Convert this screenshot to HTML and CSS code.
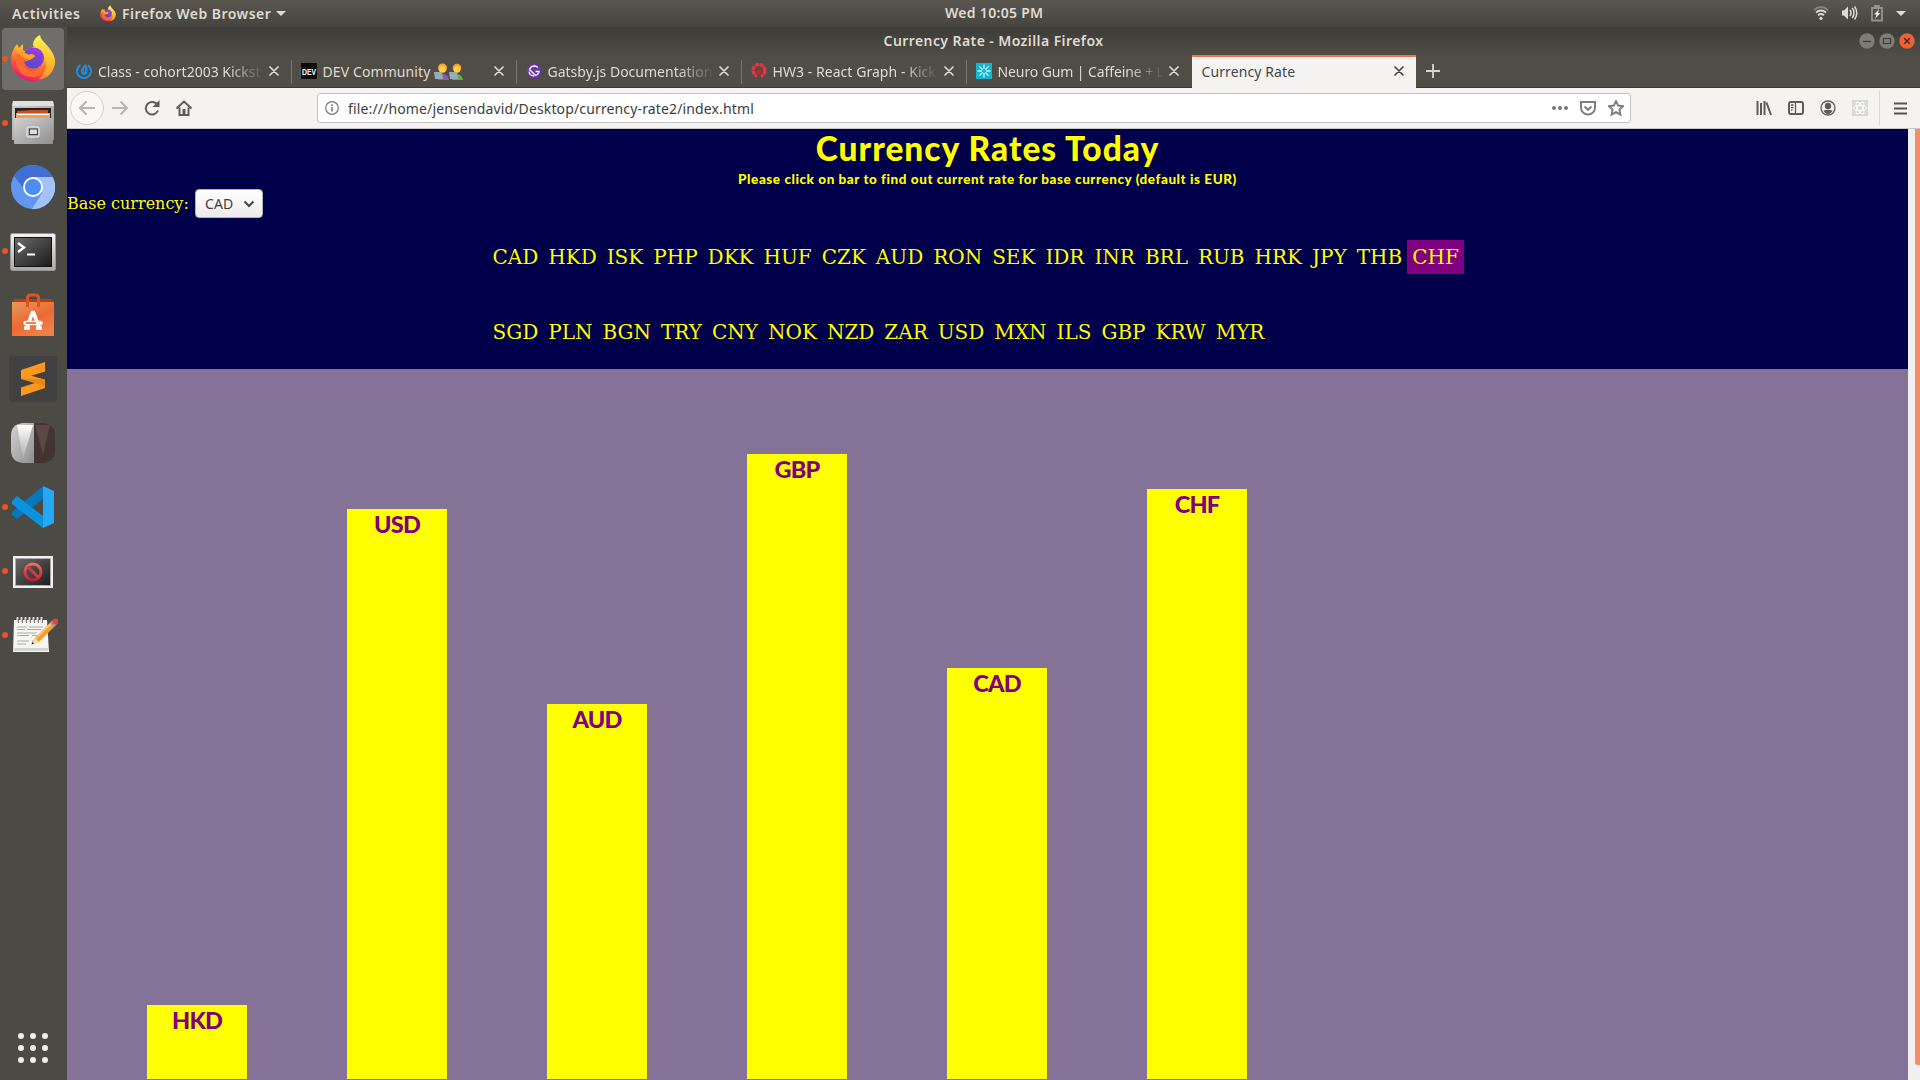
FILE: index.html
```html
<!DOCTYPE html>
<html lang="en">
<head>
<meta charset="utf-8">
<title>Currency Rate</title>
<link rel="stylesheet" href="styles.css">
</head>
<body>
<svg width="0" height="0" class="defs" aria-hidden="true">
  <defs>
    <linearGradient id="flame" x1=".8" y1="0" x2=".3" y2="1"><stop offset="0" stop-color="#fff44f"/><stop offset=".35" stop-color="#ffb02e"/><stop offset=".65" stop-color="#ff5a36"/><stop offset="1" stop-color="#e8117a"/></linearGradient>
    <linearGradient id="tail" x1=".5" y1="0" x2=".5" y2="1"><stop offset="0" stop-color="#fff44f"/><stop offset=".6" stop-color="#ffc02e"/><stop offset="1" stop-color="#ff8a30"/></linearGradient>
    <linearGradient id="globe" x1=".7" y1="0" x2=".3" y2="1"><stop offset="0" stop-color="#a238e8"/><stop offset="1" stop-color="#4b4fc4"/></linearGradient>
    <linearGradient id="steel" x1="0" y1="0" x2="1" y2="1"><stop offset="0" stop-color="#d2d2d2"/><stop offset="1" stop-color="#8e8e8e"/></linearGradient>
    <linearGradient id="frame" x1="0" y1="0" x2="0" y2="1"><stop offset="0" stop-color="#f4f4f4"/><stop offset="1" stop-color="#a8a8a8"/></linearGradient>
    <linearGradient id="screen" x1="0" y1="0" x2="1" y2="1"><stop offset="0" stop-color="#6a6a6a"/><stop offset="1" stop-color="#1c1c1c"/></linearGradient>
    <linearGradient id="bag" x1="0" y1="0" x2=".6" y2="1"><stop offset="0" stop-color="#e59a5c"/><stop offset=".6" stop-color="#ec6a32"/><stop offset="1" stop-color="#f08048"/></linearGradient>
    <linearGradient id="pale" x1="0" y1="0" x2="0" y2="1"><stop offset="0" stop-color="#ffffff"/><stop offset="1" stop-color="#a9a9a9"/></linearGradient>
    <linearGradient id="ban" x1="0" y1="0" x2="0" y2="1"><stop offset="0" stop-color="#f0705a"/><stop offset="1" stop-color="#c01c3c"/></linearGradient>
    <symbol id="firefox" viewBox="0 0 46 48">
      <path d="M1 27C1 18 4 14 7 10l2 4 4-4v6l3 2c4-4 8-6 12-6 8 1 17 6 17 15 0 12-10 20-22 20S1 38 1 27z" fill="url(#flame)"/>
      <path d="M23 12c0-6 3-9 7-11 1 6 6 8 10 14 6 8 6 17 1 24-3 4-8 6-12 6 6-6 10-14 6-22-3-6-8-9-12-11z" fill="url(#tail)"/>
      <circle cx="23.500" cy="24" r="10.500" fill="url(#globe)"/>
      <path d="M7 19c5-1 9 0 12 2 2-2 4-1 6 1-2 2-3 3-6 4-2 2-5 1-6 2 0 5 4 9 10 9 7 0 10-4 12-8 1 9-5 14-13 14S6 37 6 28z" fill="#ff6a30"/>
      <path d="M7 19c5-1 9 0 12 2 2-2 4-1 6 1-2 2-3 3-6 4l-5-2z" fill="#ffa621"/>
    </symbol>
    <symbol id="close" viewBox="0 0 10 10"><path d="M1 1l8 8M9 1l-8 8" stroke="currentColor" stroke-width="1.700" fill="none" stroke-linecap="round"/></symbol>
  </defs>
</svg>

<header class="system-bar">
  <span class="activities">Activities</span>
  <span class="app-menu"><svg class="app-icon" width="16" height="17"><use href="#firefox"/></svg><span class="app-name">Firefox Web Browser</span><i class="caret"></i></span>
  <span class="clock">Wed 10:05 PM</span>
  <span class="status">
    <svg width="16" height="16" viewBox="0 0 16 16" fill="none" stroke="#dcdad5" stroke-width="1.800"><path d="M1 5q7-6 14 0" stroke="#85837d"/><path d="M3 7.500q5-4 10 0M5 10.200q3-2.400 6 0"/><circle cx="8" cy="13.400" r="1.200" fill="#dcdad5" stroke-width="1"/></svg>
    <svg width="17" height="16" viewBox="0 0 17 16" fill="none" stroke="#dcdad5" stroke-width="1.500"><path d="M1 5.500h2l4-4v13l-4-4H1z" fill="#dcdad5" stroke="none"/><path d="M9 5q2 3 0 6M11.300 3q3.400 5 0 10M13.600 1.500q4.400 6.500 0 13"/></svg>
    <svg width="14" height="17" viewBox="0 0 14 17"><path d="M2 3h10v12.500H2zM5 3V1h4v2" fill="none" stroke="#94928c" stroke-width="1.800"/><path d="M9 4L4 9.500h2.500L5 14l5.500-6H8z" fill="#e8e6e1"/></svg>
    <i class="caret"></i>
  </span>
</header>

<div class="desktop">
  <nav class="dock">
    <div class="launcher running focused"><svg class="raised" width="46" height="48"><use href="#firefox"/></svg></div>
    <div class="launcher running"><svg width="44" height="46" viewBox="0 0 44 46">
      <path d="M2 1h40l1 6v33H1V7z" fill="url(#steel)"/><path d="M2 1h40l1 5H1z" fill="#e0e0e0"/><path d="M4 8h36v11H4z" fill="#24211f"/><path d="M6 11l15-1h16v8H6z" fill="#c9501c"/><path d="M5 13h34v6H5z" fill="#f0a050"/><path d="M6 14.500h32" stroke="#fff"/><path d="M3 18h39v26H3z" fill="url(#steel)"/><rect x="16" y="27" width="12" height="10" rx="2" fill="#aaa" stroke="#dcdcdc" stroke-width="1.500"/><rect x="18.500" y="29" width="8" height="5.500" fill="#ddd" stroke="#444"/></svg></div>
    <div class="launcher"><svg width="44" height="44" viewBox="0 0 44 44">
      <circle cx="22" cy="22" r="22" fill="#6297f1"/><path d="M3 11a22 22 0 0 1 38.500 1H22L12 23z" fill="#3f6fd4"/><path d="M22 12h19.700A22 22 0 0 1 21 44l10-16z" fill="#a3c2f9"/><circle cx="22" cy="22" r="9" fill="#4b8cf5" stroke="#fff" stroke-width="1.800"/></svg></div>
    <div class="launcher running lowered"><svg width="46" height="38" viewBox="0 0 46 38">
      <rect x=".5" y=".5" width="45" height="37" rx="2" fill="url(#frame)" stroke="#999"/><rect x="4" y="4" width="38" height="30" fill="#111"/><rect x="5" y="5" width="36" height="28" fill="url(#screen)"/><path d="M8 10l6 4.500-6 4.500" fill="none" stroke="#fff" stroke-width="2.400"/><path d="M17 21.500h8" stroke="#fff" stroke-width="2"/></svg></div>
    <div class="launcher"><svg width="42" height="44" viewBox="0 0 42 44">
      <path d="M0 9l3-3h36l3 3z" fill="#b8400f"/><path d="M0 9h42v34H0z" fill="url(#bag)"/><path d="M15.500 14V5q0-3 3-3h5q3 0 3 3v9" fill="none" stroke="#dd5426" stroke-width="3"/><path d="M15 34l5.500-14.500h1L27 34M12 35h6M24 35h6" fill="none" stroke="#fff" stroke-width="3.600"/><path d="M13.500 30h15" stroke="#fff" stroke-width="4.500" stroke-linecap="round"/><path d="M14 30h10" stroke="#ea6630" stroke-width="1.600"/></svg></div>
    <div class="launcher"><svg width="48" height="46" viewBox="0 0 48 46">
      <rect width="48" height="46" rx="3" fill="#414141"/><path d="M12 14l24-8v9.500l-14 4.200 14 3.800v8.500L12 40v-8.500l14-4.500-14-4z" fill="#ff981c"/><path d="M12 22.500l24 1v7z" fill="#dc7d12" opacity=".6"/></svg></div>
    <div class="launcher"><svg width="44" height="40" viewBox="0 0 44 40">
      <path d="M12 0h11v40H12Q0 39 0 27V13Q0 1 12 0z" fill="url(#steel)"/><path d="M23 0h9q12 1 12 13v14q0 12-12 13h-9z" fill="#433331"/><path d="M6 2h16l-10 34z" fill="url(#pale)"/><path d="M24 2h15l-7 30z" fill="#5c4745"/></svg></div>
    <div class="launcher running"><svg width="42" height="42" viewBox="0 0 42 42">
      <path d="M0 26L31 0v13L5 33l-5-4z" fill="#0877bd"/><path d="M0 15l5-5 26 20v12L0 18z" fill="#0a94df"/><path d="M31 0l11 5v32l-11 5z" fill="#27a8f2"/></svg></div>
    <div class="launcher running lowered"><svg width="40" height="32" viewBox="0 0 40 32">
      <path d="M0 0h40v32H0z" fill="#f2f2f2"/><path d="M2.500 2.500h35v27h-35z" fill="url(#screen)" stroke="#aaa"/><circle cx="20" cy="16" r="8" fill="none" stroke="url(#ban)" stroke-width="3"/><path d="M14.500 10.500l11 11" stroke="#d33a46" stroke-width="3"/></svg></div>
    <div class="launcher running pad-icon"><svg width="46" height="36" viewBox="0 0 46 36">
      <path d="M2 3h33l2 32H1z" fill="#f5f5f2"/><path d="M2 31h34v3H2z" fill="#d4d4d0"/><path d="M5 10h10m2 0h14M5 12.500h8m2 0h14M5 16h20M5 18.500h12m3 0h9M5 24h12m3 0h6M5 27h9" stroke="#aaa"/><path d="M5.500 0v5m4-5v5m4-5v5m4-5v5m4-5v5m4-5v5m4-5v5" stroke="#ddd" stroke-width="2"/><path d="M6.500 2v4m4-4v4m4-4v4m4-4v4m4-4v4m4-4v4m4-4v4" stroke="#555" stroke-width=".8"/><path d="M20 27l3-6L40 4l4 4-17 17z" fill="#f19d32"/><path d="M23 21L40 4l1.500 1.500L24.500 22z" fill="#fbc36c"/><path d="M20 27l3-6 4 4z" fill="#f3dbb2"/><path d="M19.500 27.500l1-2.500 1.500 1.500z" fill="#111"/><path d="M38 6l3-3 4 4-3 3z" fill="#999"/><circle cx="43.500" cy="4.500" r="3" fill="#e8384a"/></svg></div>
    <svg class="all-apps" width="30" height="30" viewBox="0 0 30 30" fill="#f0efed"><circle cx="3" cy="3" r="3"/><circle cx="15" cy="3" r="3"/><circle cx="27" cy="3" r="3"/><circle cx="3" cy="15" r="3"/><circle cx="15" cy="15" r="3"/><circle cx="27" cy="15" r="3"/><circle cx="3" cy="27" r="3"/><circle cx="15" cy="27" r="3"/><circle cx="27" cy="27" r="3"/></svg>
  </nav>

  <main class="window">
    <div class="title-bar">
      <span class="window-title">Currency Rate - Mozilla Firefox</span>
      <span class="window-buttons">
        <svg width="16" height="16" viewBox="0 0 16 16"><circle cx="8" cy="8" r="7.700" fill="#7e7c76"/><path d="M4 8.500h8" stroke="#3c3b37" stroke-width="1.200"/></svg>
        <svg width="16" height="16" viewBox="0 0 16 16"><circle cx="8" cy="8" r="7.700" fill="#7e7c76"/><path d="M4.500 5.500h7v5h-7z" fill="none" stroke="#3c3b37" stroke-width="1.200"/></svg>
        <svg width="16" height="16" viewBox="0 0 16 16"><circle cx="8" cy="8" r="7.700" fill="#ee6035"/><path d="M5.200 5.200l5.600 5.600m0-5.600l-5.600 5.600" stroke="#3c2b24" stroke-width="1.400"/></svg>
      </span>
    </div>

    <div class="tabs">
      <div class="tab"><svg class="favicon" viewBox="0 0 16 16"><path d="M4.500 2A7 7 0 1 0 12 2.300" fill="none" stroke="#2389d7" stroke-width="2.200"/><path d="M9.800.5q2.500 4.500 1.700 8.500a3.300 3.300 0 0 1-6.600-.5Q5 5 9.800.5z" fill="#2389d7"/><path d="M8.500 5v4" stroke="#504d46"/></svg><span class="label t1">Class - cohort2003 Kickst</span><svg class="x"><use href="#close"/></svg></div>
      <div class="tab"><svg class="favicon" viewBox="0 0 16 16"><path d="M0 0h16v16H0z" fill="#0c0c0c"/><text x="1" y="11.500" class="dev" textLength="14" lengthAdjust="spacingAndGlyphs">DEV</text></svg><span class="label t2">DEV Community <svg class="people" width="30" height="17" viewBox="0 0 30 17"><circle cx="8.500" cy="5" r="4.500" fill="#f6a530"/><circle cx="8.500" cy="6.500" r="3.200" fill="#ffd23c"/><path d="M4 17q0-6 5-6t6 6z" fill="#9058b8"/><path d="M0 9h8l1 7H1z" fill="#9aabb5"/><circle cx="23" cy="5" r="4.300" fill="#f6a530"/><circle cx="23" cy="6.500" r="3.200" fill="#ffd23c"/><path d="M18 17q0-6 5-6t6 6z" fill="#5fae3f"/><path d="M15 9h8l1 7h-8z" fill="#9aabb5"/></svg></span><svg class="x"><use href="#close"/></svg></div>
      <div class="tab"><svg class="favicon" viewBox="0 0 16 16"><circle cx="8" cy="8" r="7.500" fill="#6b36a5"/><path d="M11.800 4.500A5 5 0 0 0 3.500 6.500l6 6A5 5 0 0 0 13 8.500H9.500M3 8.500q.5 4 5 4.500" stroke="#fff" stroke-width="1.300" fill="none"/></svg><span class="label t3">Gatsby.js Documentation</span><svg class="x"><use href="#close"/></svg></div>
      <div class="tab"><svg class="favicon" viewBox="0 0 16 16"><circle cx="8" cy="7.500" r="6" fill="none" stroke="#ef3347" stroke-width="3.200" stroke-dasharray="4 .7"/><path d="M6 11h4v5H6z" fill="#504d46"/><circle cx="8" cy="8.800" r="2.300" fill="#e01b30"/></svg><span class="label t4">HW3 - React Graph - Kick</span><svg class="x"><use href="#close"/></svg></div>
      <div class="tab"><svg class="favicon" viewBox="0 0 16 16"><path d="M0 0h16v16H0z" fill="#13b6d0"/><path d="M8 2v3.500m0 5V14M2 8h3.500m5 0H14M3.800 3.800l2.400 2.400m3.600 3.600l2.400 2.400m0-8.400L9.800 6.200M6.200 9.800l-2.400 2.400" stroke="#c8f2f8" stroke-width="1.300" stroke-linecap="round"/></svg><span class="label t5">Neuro Gum | Caffeine + L</span><svg class="x"><use href="#close"/></svg></div>
      <div class="tab active"><span class="label t6">Currency Rate</span><svg class="x"><use href="#close"/></svg></div>
      <svg class="new-tab" width="14" height="14"><path d="M7 0v14M0 7h14" stroke="#d8d6d1" stroke-width="1.800"/></svg>
    </div>

    <div class="toolbar">
      <div class="nav-buttons">
        <span class="back"><svg width="18" height="16" viewBox="0 0 18 16"><path d="M17 8H2M8.500 1.500L2 8l6.500 6.500" class="line faint"/></svg></span>
        <svg width="18" height="16" viewBox="0 0 18 16"><path d="M1 8h15M9.500 1.500L16 8l-6.500 6.500" class="line faint"/></svg>
        <svg width="16" height="16" viewBox="0 0 16 16"><path d="M13.500 5A6.300 6.300 0 1 0 14 10.500" class="line"/><path d="M15.500 0v7H8.500z" fill="#5c5c5a"/></svg>
        <svg class="home" width="16" height="16" viewBox="0 0 16 16"><path d="M.5 8.500L8 1.500l7.500 7M3.500 7.500V15h9V7.500" class="line"/><path d="M6.500 9h3v6h-3z" fill="#5c5c5a"/></svg>
      </div>
      <div class="url-bar">
        <svg width="14" height="14" viewBox="0 0 14 14"><circle cx="7" cy="7" r="6.300" fill="none" stroke="#777" stroke-width="1.200"/><path d="M7 6v4.500M7 3.300v1.600" stroke="#777" stroke-width="1.500"/></svg>
        <span class="url">file:///home/jensendavid/Desktop/currency-rate2/index.html</span>
        <svg class="more" width="16" height="4" fill="#777"><circle cx="2" cy="2" r="2"/><circle cx="8" cy="2" r="2"/><circle cx="14" cy="2" r="2"/></svg>
        <svg width="16" height="15" viewBox="0 0 16 15"><path d="M1 1h14v6a7 6.500 0 0 1-14 0zM4.500 5.500L8 8.800l3.500-3.300" class="line mid"/></svg>
        <svg width="16" height="16" viewBox="0 0 16 16"><path d="M8 1l2.100 4.600 5 .6-3.700 3.400 1 5L8 12.100l-4.400 2.500 1-5L.9 6.200l5-.6z" class="line mid"/></svg>
      </div>
      <div class="tools">
        <svg width="16" height="16" viewBox="0 0 16 16"><path d="M1.500 1v14M5 3v12M8.500 1v14M10.500 2.500L15 15" class="line"/></svg>
        <svg width="16" height="16" viewBox="0 0 16 16"><rect x="1" y="2" width="14" height="12" rx="2" class="line"/><path d="M7.500 2v12M3 5h2.500M3 7.500h2.500M3 10h1.500" class="line thin"/></svg>
        <svg width="16" height="16" viewBox="0 0 16 16"><circle cx="8" cy="8" r="7" class="line thin"/><circle cx="8" cy="6" r="3.200" fill="#5c5c5a"/><path d="M3.500 10.500q4.500-1.500 9 0Q11 14 8 14t-4.500-3.500z" fill="#5c5c5a"/></svg>
        <svg width="16" height="16" viewBox="0 0 16 16"><path d="M0 0h16v16H0z" fill="#d8d8d6"/><g fill="none" stroke="#fff" stroke-width="1"><ellipse cx="8" cy="8" rx="6.500" ry="2.500"/><ellipse cx="8" cy="8" rx="6.500" ry="2.500" transform="rotate(60 8 8)"/><ellipse cx="8" cy="8" rx="6.500" ry="2.500" transform="rotate(120 8 8)"/></g></svg>
      </div>
      <div class="menu"><svg width="13" height="13"><path d="M0 1.500h13M0 6.500h13M0 11.500h13" stroke="#555" stroke-width="1.800"/></svg></div>
    </div>

    <div class="viewport">
      <div class="page">
        <section class="intro">
          <h1>Currency Rates Today</h1>
          <h5>Please click on bar to find out current rate for base currency (default is EUR)</h5>
          <div class="base">Base currency: <span class="select"><span class="value">CAD</span><svg width="12" height="8" viewBox="0 0 12 8"><path d="M1.500 1.500L6 6l4.500-4.500" fill="none" stroke="#4a4a4a" stroke-width="2.200"/></svg></span></div>
          <div class="codes">
            <div class="code-row"><span>CAD</span><span>HKD</span><span>ISK</span><span>PHP</span><span>DKK</span><span>HUF</span><span>CZK</span><span>AUD</span><span>RON</span><span>SEK</span><span>IDR</span><span>INR</span><span>BRL</span><span>RUB</span><span>HRK</span><span>JPY</span><span>THB</span><span class="picked">CHF</span></div>
            <div class="code-row"><span>SGD</span><span>PLN</span><span>BGN</span><span>TRY</span><span>CNY</span><span>NOK</span><span>NZD</span><span>ZAR</span><span>USD</span><span>MXN</span><span>ILS</span><span>GBP</span><span>KRW</span><span>MYR</span></div>
          </div>
        </section>
        <section class="chart">
          <div class="bar" style="height:74px">HKD</div>
          <div class="bar" style="height:570px">USD</div>
          <div class="bar" style="height:375px">AUD</div>
          <div class="bar" style="height:625px">GBP</div>
          <div class="bar" style="height:411px">CAD</div>
          <div class="bar" style="height:590px">CHF</div>
        </section>
      </div>
      <div class="scrollbar"><div class="thumb"></div></div>
    </div>
  </main>
</div>
</body>
</html>
```
FILE: styles.css
```css
* { box-sizing: border-box; }
body {
  margin: 0;
  width: 1920px;
  height: 1080px;
  overflow: hidden;
  display: flex;
  flex-direction: column;
  background: #4b4a45;
  font-family: "Noto Sans", "Open Sans", sans-serif;
  font-size: 14px;
}
svg { display: block; flex: none; }
.defs { position: absolute; }

/* system bar */
.system-bar {
  height: 27px;
  flex: none;
  display: grid;
  grid-template-columns: auto auto 1fr auto;
  align-items: center;
  padding: 0 14px 1px 12px;
  background: linear-gradient(#5a574f, #45443f);
  color: #dfdbd2;
  font-weight: 600;
  position: relative;
}
.activities { width: 88px; letter-spacing: .6px; }
.app-menu { display: flex; align-items: center; }
.app-icon { margin-right: 6px; }
.app-name { width: 154px; white-space: nowrap; letter-spacing: .47px; }
.caret { border: 5px solid transparent; border-top-color: #dfdbd2; border-bottom: 0; }
.clock { position: absolute; left: 945px; top: 3px; white-space: nowrap; letter-spacing: .3px; }
.status { grid-column: 4; display: flex; align-items: center; gap: 12px; }
.status .caret { margin-left: 0; }

.desktop { flex: 1; display: flex; min-height: 0; }

/* dock */
.dock {
  width: 67px;
  flex: none;
  display: flex;
  flex-direction: column;
  padding: 1px 2px 17px;
  background: #4b4a45;
}
.launcher {
  width: 62px;
  height: 62px;
  flex: none;
  margin-bottom: 2px;
  display: flex;
  align-items: center;
  justify-content: center;
  border-radius: 4px;
  position: relative;
}
.launcher.focused { background: #6f6e6a; }
.raised { margin-bottom: 2px; }
.lowered { padding-top: 2px; }
.pad-icon { padding-left: 3px; }
.launcher.running::before {
  content: "";
  position: absolute;
  left: 0;
  top: 28px;
  width: 6px;
  height: 6px;
  border-radius: 50%;
  background: #e95420;
}
.all-apps { margin: auto auto 0 16px; }

/* browser window */
.window { flex: 1; display: flex; flex-direction: column; min-width: 0; }
.title-bar {
  height: 28px;
  flex: none;
  display: flex;
  align-items: center;
  justify-content: center;
  padding-bottom: 2px;
  background: linear-gradient(#3c3b37, #504d46);
  color: #dfdbd2;
  font-weight: 600;
  position: relative;
}
.window-title { white-space: nowrap; letter-spacing: .42px; }
.window-buttons { position: absolute; right: 5px; top: 6px; display: flex; gap: 4px; }

.tabs {
  height: 33px;
  flex: none;
  display: flex;
  background: #504d46;
  border-bottom: 1px solid #3a3935;
  color: #dfdbd2;
}
.tab {
  width: 225px;
  height: 32px;
  flex: none;
  display: flex;
  align-items: center;
  padding: 0 0 0 9px;
  position: relative;
}
.tab:not(:nth-child(5)):not(.active)::after {
  content: "";
  position: absolute;
  right: 0;
  top: 5px;
  width: 1px;
  height: 24px;
  background: #79766f;
}
.tab:first-child { width: 224.500px; }
.favicon { width: 16px; height: 16px; margin-right: 6px; }
.dev { font: bold 9px "Liberation Sans", sans-serif; fill: #fff; }
.label {
  width: 166px;
  display: flex;
  align-items: center;
  white-space: pre;
  -webkit-mask-image: linear-gradient(90deg, #000 130px, transparent 166px);
  mask-image: linear-gradient(90deg, #000 130px, transparent 166px);
}
.t2, .t6 { -webkit-mask-image: none; mask-image: none; }
.t2 { letter-spacing: .1px; }
.t4 { letter-spacing: .05px; }
.t5 { letter-spacing: -.1px; }
.x { width: 10px; height: 10px; margin-left: 5px; }
.tab.active {
  width: 224.500px;
  height: 32px;
  padding: 0 0 2px 10px;
  background: #f4f3f1;
  border-top: 2px solid #f07746;
  box-shadow: 0 1px #f4f3f1;
  color: #45454a;
}
.tab.active .label { width: 187px; letter-spacing: .1px; }
.new-tab { margin: 9px 0 0 9.500px; }

.toolbar {
  height: 41px;
  flex: none;
  display: flex;
  align-items: center;
  background: #f4f3f1;
  border-bottom: 1px solid #c9c6c3;
}
.nav-buttons { width: 250px; display: flex; align-items: center; padding-left: 3px; gap: 15px; }
.back {
  width: 34px;
  height: 34px;
  margin-right: -8px;
  display: flex;
  align-items: center;
  justify-content: center;
  border: 1px solid #d2d1cf;
  border-radius: 50%;
  background: #f9f8f7;
}
.home { margin-left: 1px; }
.line { fill: none; stroke: #5c5c5a; stroke-width: 2; }
.faint { stroke: #b7b6b4; }
.mid { stroke: #808080; }
.thin { stroke-width: 1.300; }
.url-bar {
  width: 1314px;
  height: 30px;
  display: flex;
  align-items: center;
  gap: 12px;
  padding: 0 6px 0 7px;
  background: #fff;
  border: 1px solid #c5c3c1;
  border-radius: 3px;
  color: #3d3d3d;
}
.url { margin-left: -3px; white-space: nowrap; letter-spacing: .14px; }
.more { margin-left: auto; }
.tools { margin-left: 125px; display: flex; gap: 16px; }
.menu { height: 34px; margin-left: 11px; padding-left: 14px; display: flex; align-items: center; border-left: 1px solid #d9d8d6; }

/* rendered page */
.viewport { flex: 1; display: flex; min-height: 0; }
.page { flex: 1; display: flex; flex-direction: column; background: #847397; }
.intro {
  height: 240px;
  flex: none;
  background: #00004b;
  color: #ff0;
  font-family: "DejaVu Serif", serif;
}
h1, h5 { margin: 0; font-family: Lato, sans-serif; font-weight: 900; text-align: center; white-space: nowrap; }
h1 { height: 41px; font-size: 33.500px; line-height: 39px; letter-spacing: 1px; }
h5 { height: 19px; font-size: 13.500px; line-height: 19px; letter-spacing: .55px; }
.base { height: 29px; display: flex; align-items: center; font-size: 16px; white-space: pre; }
.select {
  width: 68px;
  height: 29px;
  margin-left: 1px;
  padding: 0 7px 0 9px;
  display: flex;
  align-items: center;
  justify-content: space-between;
  border: 1px solid #b5b2ae;
  border-radius: 4px;
  background: linear-gradient(#fff, #edecea);
  color: #3d3d3d;
  font: 14px "Noto Sans", sans-serif;
}
.value { letter-spacing: .2px; }
.codes { width: 1000px; margin: 22px auto 0; display: grid; gap: 41px; font-size: 20px; line-height: 24px; }
.code-row { display: flex; }
.code-row span { padding: 5px; }
.code-row .picked { background: #800080; }

.chart { flex: 1; display: flex; align-items: flex-end; gap: 100px; padding: 0 0 1px 80px; }
.bar {
  width: 100px;
  background: #ff0;
  color: #800080;
  font: 900 23.500px/31px Lato, sans-serif;
  letter-spacing: -.8px;
  text-align: center;
}
.scrollbar { width: 12px; flex: none; padding-left: 7px; background: #f1f0ee; }
.thumb { width: 5px; height: 936px; background: #f58e68; border-radius: 0 0 0 2px; }
```
